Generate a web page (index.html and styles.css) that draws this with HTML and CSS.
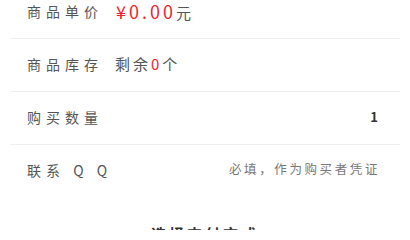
FILE: index.html
```html
<!DOCTYPE html>
<html lang="zh">
<head>
<meta charset="utf-8">
<link rel="stylesheet" href="styles.css">
</head>
<body>
<div class="form">
  <div class="row">
    <span class="label">商品单价</span>
    <span class="value"><span class="red price">¥0.00</span>元</span>
  </div>
  <div class="row">
    <span class="label">商品库存</span>
    <span class="value">剩余<span class="red">0</span>个</span>
  </div>
  <div class="row">
    <span class="label">购买数量</span>
    <span class="input">1</span>
  </div>
  <div class="row last">
    <span class="label">联系 Q Q</span>
    <span class="input placeholder">必填，作为购买者凭证</span>
  </div>
  <div class="section-title">选择支付方式</div>
</div>
</body>
</html>
```
FILE: styles.css
```css
html, body {
  margin: 0;
  padding: 0;
  background: #fff;
}
body {
  font-family: "Noto Sans CJK SC", "Liberation Sans", sans-serif;
  width: 410px;
  height: 230px;
  overflow: hidden;
}
.form {
  margin-top: -14px;
  padding: 0 10px 0 10px;
}
.row {
  display: flex;
  align-items: center;
  height: 49px;
  line-height: 1;
  border-bottom: 1px solid #eeeeee;
  padding: 0 22px 3px 17px;
  box-sizing: content-box;
}
.row.last {
  border-bottom: none;
}
.label {
  width: 88px;
  flex: none;
  font-size: 14px;
  letter-spacing: 5px;
  color: #555;
}
.value {
  font-size: 15px;
  color: #555;
  letter-spacing: 3px;
}
.red {
  color: #f5222d;
}
.price {
  font-size: 18px;
  letter-spacing: 3px;
  margin-left: 1px;
}
.input {
  flex: 1;
  text-align: right;
  font-size: 13px;
  color: #333;
  font-weight: bold;
}
.placeholder {
  font-weight: normal;
  color: #777;
  font-size: 12.5px;
  letter-spacing: 2.6px;
  margin-right: -2px;
}
.section-title {
  text-align: center;
  font-size: 15px;
  color: #333;
  font-weight: bold;
  letter-spacing: 3px;
  padding-top: 26px;
}
```
